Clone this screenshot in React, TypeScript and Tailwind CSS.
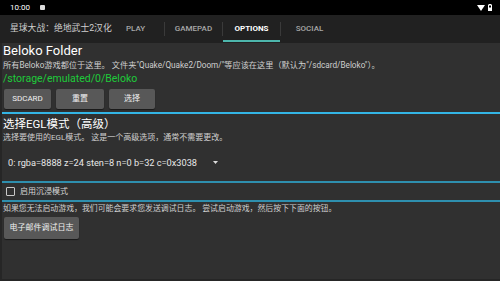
import React from 'react'

const font = { fontFamily: 'Roboto, "Noto Sans CJK SC", sans-serif' }

function Tab({ label, active }: { label: string; active?: boolean }) {
  return (
    <div className="relative flex h-full w-[57px] items-center justify-center">
      <span className={active ? 'text-[8px] font-bold text-white' : 'text-[8px] font-medium text-[#a8a8a8]'}>{label}</span>
      {active && <div className="absolute bottom-[1px] left-0 right-0 h-[2px] bg-[#4db6ac]" />}
    </div>
  )
}

function Sep() {
  return <div className="h-[14px] w-px bg-[#3a3a3a]" />
}

function Btn({ children, w }: { children: React.ReactNode; w: string }) {
  return (
    <button className={`flex h-[20px] items-center justify-center rounded-[2px] bg-[#585858] text-[8px] font-normal text-[#f0f0f0] shadow-[0_1px_1px_rgba(0,0,0,0.5)] ${w}`}>
      {children}
    </button>
  )
}

export default function App() {
  return (
    <div className="flex h-[281px] w-[500px] flex-col overflow-hidden bg-black" style={font}>
      {/* status bar */}
      <div className="flex h-[15px] items-center justify-between bg-black pl-[10px] pr-[8px]">
        <div className="flex items-center gap-[10px]">
          <span className="text-[8px] text-white">10:00</span>
          <div className="h-[5px] w-[5px] rounded-[1px] bg-[#ddd]" />
        </div>
        <div className="flex items-center gap-[3px]">
          <svg width="8" height="6" viewBox="0 0 8 6">
            <path d="M0 0 H8 L4 6 Z" fill="#fff" />
          </svg>
          <svg width="4" height="7" viewBox="0 0 4 7">
            <rect x="1" y="0" width="2" height="1" fill="#fff" />
            <rect x="0.5" y="1" width="3" height="5.5" fill="none" stroke="#fff" strokeWidth="1" />
            <rect x="0.5" y="3.5" width="3" height="3" fill="#fff" />
          </svg>
        </div>
      </div>

      {/* tab bar */}
      <div className="flex h-[28px] items-center bg-[#212121]">
        <div className="w-[107px] whitespace-nowrap pl-[10px] text-[8.8px] text-[#d0d0d0]">星球大战：绝地武士2汉化</div>
        <div className="flex h-full items-center">
          <Tab label="PLAY" />
          <Sep />
          <Tab label="GAMEPAD" />
          <Sep />
          <Tab label="OPTIONS" active />
          <Sep />
          <Tab label="SOCIAL" />
        </div>
      </div>

      {/* content */}
      <div className="flex flex-1 flex-col border-b-2 border-l-[2px] border-[#262626] bg-[#303030]">
        <div className="pl-[1px]">
          <div className="text-[13px] leading-[16px] text-white">Beloko Folder</div>
          <div className="whitespace-nowrap text-[8.2px] leading-[12px] text-[#cfcfcf]">
            所有Beloko游戏都位于这里。 文件夹"Quake/Quake2/Doom/"等应该在这里（默认为"/sdcard/Beloko"）。
          </div>
          <div className="text-[10.5px] leading-[16px] text-[#1ecb3a]">/storage/emulated/0/Beloko</div>
          <div className="mt-[2px] flex gap-[5px] pl-[1px]">
            <Btn w="w-[47px]">SDCARD</Btn>
            <Btn w="w-[48px]">重置</Btn>
            <Btn w="w-[46px]">选择</Btn>
          </div>
        </div>

        <div className="mt-[3px] h-[2px] bg-[#33b5e5]" />

        <div className="pl-[1px] pt-[2px]">
          <div className="text-[11.5px] leading-[16px] text-white">选择EGL模式（高级）</div>
          <div className="text-[8px] leading-[12px] text-[#cfcfcf]">选择要使用的EGL模式。 这是一个高级选项，通常不需要更改。</div>
          <div className="flex h-[37px] items-center pl-[5px]">
            <span className="text-[9.2px] text-[#e8e8e8]">0: rgba=8888 z=24 sten=8 n=0 b=32 c=0x3038</span>
            <svg className="ml-[16px]" width="5" height="3" viewBox="0 0 5 3">
              <path d="M0 0 H5 L2.5 3 Z" fill="#ddd" />
            </svg>
          </div>
        </div>

        <div className="h-[2px] bg-[#2e8fae]" />

        <div className="flex h-[17px] items-center pl-[4px]">
          <div className="h-[9px] w-[9px] rounded-[1px] border-[1.5px] border-[#c8c8c8]" />
          <span className="ml-[5px] text-[8px] text-[#d8d8d8]">启用沉浸模式</span>
        </div>

        <div className="h-[2px] bg-[#2e8fae]" />

        <div className="pl-[1px] pt-[1px]">
          <div className="text-[7.9px] leading-[12px] text-[#cfcfcf]">
            如果您无法启动游戏，我们可能会要求您发送调试日志。 尝试启动游戏，然后按下下面的按钮。
          </div>
          <div className="mt-[2px] pl-[1px]">
            <Btn w="w-[75px] h-[22px]">电子邮件调试日志</Btn>
          </div>
        </div>
      </div>
    </div>
  )
}
